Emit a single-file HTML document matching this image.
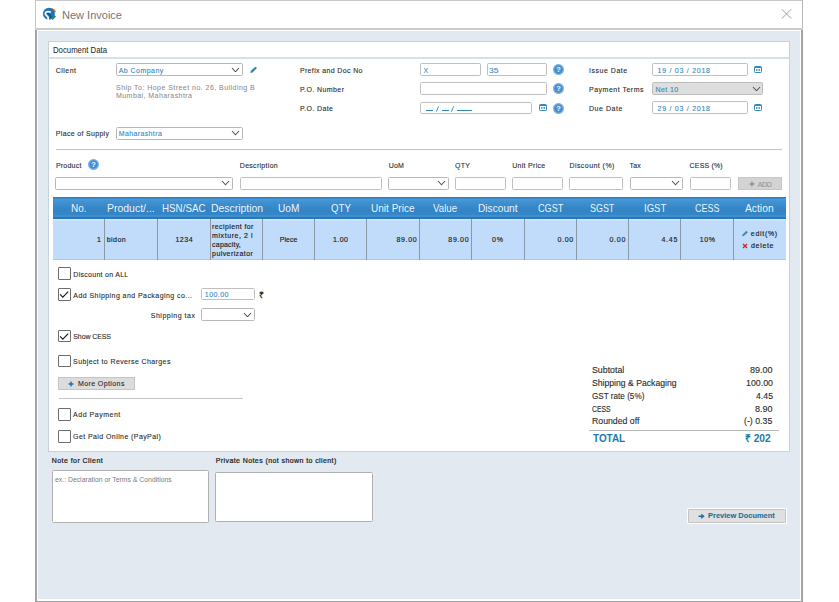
<!DOCTYPE html>
<html><head><meta charset="utf-8"><style>
html,body{margin:0;padding:0;background:#fff;width:839px;height:602px;overflow:hidden;position:relative;}
body>div,body>svg{position:absolute;}
.t{white-space:nowrap;font-family:"Liberation Sans",sans-serif;transform-origin:0 0;}
</style></head><body>
<div style="left:35.00px;top:0.00px;width:768.00px;height:602.00px;background:#fff;"></div>
<div style="left:35.00px;top:0.00px;width:768.00px;height:1.00px;background:#c8c8c8;"></div>
<div style="left:35.00px;top:0.00px;width:1.00px;height:28.00px;background:#c4c4c4;"></div>
<div style="left:801.50px;top:0.00px;width:1.50px;height:28.00px;background:#b8b8b8;"></div>
<div style="left:35.00px;top:28.00px;width:768.00px;height:2.00px;background:#cbcbcb;"></div>
<div style="left:35.00px;top:30.00px;width:2.00px;height:572.00px;background:#a3a3a3;"></div>
<div style="left:801.20px;top:30.00px;width:2.00px;height:572.00px;background:#a3a3a3;"></div>
<div style="left:35.00px;top:600.50px;width:768.20px;height:1.50px;background:#a3a3a3;"></div>
<div style="left:38.00px;top:31.00px;width:761.50px;height:567.60px;background:#e3e9f1;"></div>
<svg style="left:41.30px;top:7.00px;" width="16" height="14" viewBox="0 0 16 14">
<path d="M10.4 0.9 A6.4 6.4 0 0 1 15.2 4.9 L13.1 5.6 A4.3 4.3 0 0 0 9.8 2.8 Z" fill="#f07a1a"/>
<path d="M15.1 9.1 A6.4 6.4 0 0 1 11.3 12.9 L10.4 11 A4.3 4.3 0 0 0 13 8.4 Z" fill="#2e9a2e"/>
<circle cx="7.9" cy="6.8" r="6" fill="#1e74b8"/>
<path d="M9.8 5.4 C8.2 4.3 5 4.3 4.3 6.2 C3.8 7.8 6.2 8.6 6.9 10 C7.3 10.8 7.4 11.8 7.2 13.2" stroke="#fff" stroke-width="1.7" fill="none"/><path d="M6.5 6.3 C8.5 7 9.8 8.6 10 11" stroke="#0f4f8a" stroke-width="1.1" fill="none"/>
</svg>
<div class="t" style="left:62.00px;top:10.27px;font-size:11.5px;line-height:11.5px;color:#767676;font-weight:400;transform:scaleX(0.9579);">New Invoice</div>
<svg style="left:781.00px;top:8.00px;" width="12" height="12" viewBox="0 0 12 12"><path d="M0.8 1.2 L10.2 10.6 M10.2 1.2 L0.8 10.6" stroke="#8c8c8c" stroke-width="0.85"/></svg>
<div style="left:48.00px;top:41.00px;width:742.00px;height:411.00px;background:#fff;border:1px solid #c6d3dd;box-sizing:border-box;"></div>
<div class="t" style="left:52.60px;top:45.98px;font-size:9px;line-height:9px;color:#222;font-weight:400;transform:scaleX(0.8636);">Document Data</div>
<div style="left:49.00px;top:57.00px;width:740.00px;height:1.50px;background:#d6e0e8;"></div>
<div class="t" style="left:55.70px;top:66.77px;font-size:7px;line-height:7px;color:#2a2a2a;font-weight:400;letter-spacing:0.481px;-webkit-text-stroke:0.1px #2a2a2a;">Client</div>
<div class="t" style="left:116.00px;top:84.27px;font-size:7px;line-height:7px;color:#8a8a8a;font-weight:400;letter-spacing:0.458px;-webkit-text-stroke:0.05px #8a8a8a;">Ship To: Hope Street no. 26, Building B</div>
<div class="t" style="left:116.00px;top:92.47px;font-size:7px;line-height:7px;color:#8a8a8a;font-weight:400;letter-spacing:0.440px;-webkit-text-stroke:0.05px #8a8a8a;">Mumbai, Maharashtra</div>
<div class="t" style="left:55.80px;top:130.17px;font-size:7px;line-height:7px;color:#2a2a2a;font-weight:400;letter-spacing:0.326px;-webkit-text-stroke:0.1px #2a2a2a;">Place of Supply</div>
<div class="t" style="left:299.90px;top:66.77px;font-size:7px;line-height:7px;color:#2a2a2a;font-weight:400;letter-spacing:0.362px;-webkit-text-stroke:0.1px #2a2a2a;">Prefix and Doc No</div>
<div class="t" style="left:299.90px;top:85.87px;font-size:7px;line-height:7px;color:#2a2a2a;font-weight:400;letter-spacing:0.416px;-webkit-text-stroke:0.1px #2a2a2a;">P.O. Number</div>
<div class="t" style="left:299.90px;top:104.87px;font-size:7px;line-height:7px;color:#2a2a2a;font-weight:400;letter-spacing:0.408px;-webkit-text-stroke:0.1px #2a2a2a;">P.O. Date</div>
<div class="t" style="left:589.00px;top:66.77px;font-size:7px;line-height:7px;color:#2a2a2a;font-weight:400;letter-spacing:0.526px;-webkit-text-stroke:0.1px #2a2a2a;">Issue Date</div>
<div class="t" style="left:589.00px;top:85.87px;font-size:7px;line-height:7px;color:#2a2a2a;font-weight:400;letter-spacing:0.500px;-webkit-text-stroke:0.1px #2a2a2a;">Payment Terms</div>
<div class="t" style="left:589.00px;top:104.87px;font-size:7px;line-height:7px;color:#2a2a2a;font-weight:400;letter-spacing:0.547px;-webkit-text-stroke:0.1px #2a2a2a;">Due Date</div>
<div style="left:116.00px;top:63.00px;width:127.00px;height:13.00px;background:#fff;border:1px solid #b8b8b8;border-radius:1.5px;box-sizing:border-box;"></div>
<svg style="left:231.10px;top:66.60px;" width="9" height="5.8" viewBox="0 0 9 5.8"><path d="M1 1 L4.50 4.80 L8.00 1" stroke="#505050" stroke-width="1.05" fill="none"/></svg>
<div class="t" style="left:118.70px;top:66.67px;font-size:7px;line-height:7px;color:#3188be;font-weight:400;letter-spacing:0.459px;-webkit-text-stroke:0.1px #3188be;">Ab Company</div>
<svg style="left:249.00px;top:65.50px;" width="9" height="8" viewBox="0 0 9 8"><path d="M1.3 6.9 L1.9 4.7 L5.8 1.2 Q6.6 0.6 7.4 1.3 Q8 2 7.3 2.8 L3.5 6.4 Z" fill="#2c84b0"/></svg>
<div style="left:116.00px;top:127.00px;width:127.00px;height:12.50px;background:#fff;border:1px solid #b8b8b8;border-radius:1.5px;box-sizing:border-box;"></div>
<svg style="left:231.10px;top:130.35px;" width="9" height="5.8" viewBox="0 0 9 5.8"><path d="M1 1 L4.50 4.80 L8.00 1" stroke="#505050" stroke-width="1.05" fill="none"/></svg>
<div class="t" style="left:118.70px;top:130.37px;font-size:7px;line-height:7px;color:#3188be;font-weight:400;letter-spacing:0.380px;-webkit-text-stroke:0.1px #3188be;">Maharashtra</div>
<div style="left:420.00px;top:63.30px;width:61.00px;height:12.80px;background:#fff;border:1px solid #bfbfbf;border-radius:1.5px;box-sizing:border-box;"></div>
<div class="t" style="left:423.60px;top:66.77px;font-size:7px;line-height:7px;color:#3188be;font-weight:400;-webkit-text-stroke:0.05px #3188be;">X</div>
<div style="left:487.00px;top:63.30px;width:60.00px;height:12.80px;background:#fff;border:1px solid #bfbfbf;border-radius:1.5px;box-sizing:border-box;"></div>
<div class="t" style="left:489.40px;top:66.77px;font-size:7px;line-height:7px;color:#3188be;font-weight:400;transform:scaleX(1.1944);-webkit-text-stroke:0.08px #3188be;">35</div>
<div style="left:420.00px;top:82.40px;width:127.00px;height:12.80px;background:#fff;border:1px solid #bfbfbf;border-radius:1.5px;box-sizing:border-box;"></div>
<div style="left:420.00px;top:101.50px;width:112.00px;height:12.80px;background:#fff;border:1px solid #bfbfbf;border-radius:1.5px;box-sizing:border-box;"></div>
<div style="left:425.50px;top:110.20px;width:7.60px;height:0.90px;background:#3188be;"></div>
<div style="left:441.70px;top:110.20px;width:7.30px;height:0.90px;background:#3188be;"></div>
<div style="left:457.00px;top:110.20px;width:15.20px;height:0.90px;background:#3188be;"></div>
<svg style="left:435.60px;top:105.50px;" width="3" height="6" viewBox="0 0 3 6"><path d="M2.6 0.3 L0.4 5.7" stroke="#3188be" stroke-width="0.9"/></svg>
<svg style="left:451.20px;top:105.50px;" width="3" height="6" viewBox="0 0 3 6"><path d="M2.6 0.3 L0.4 5.7" stroke="#3188be" stroke-width="0.9"/></svg>
<svg style="left:539.00px;top:104.00px;" width="8" height="7" viewBox="0 0 8 7"><rect x="0.5" y="0.5" width="7" height="6" rx="0.8" fill="none" stroke="#3486bb" stroke-width="1"/><rect x="1" y="1" width="6" height="1" fill="#3486bb"/><rect x="2" y="3" width="1.5" height="2" fill="#5b9fcb"/><rect x="4.5" y="3" width="1.5" height="2" fill="#5b9fcb"/></svg>
<svg style="left:552.90px;top:64.30px;" width="11" height="11" viewBox="0 0 11 11"><circle cx="5.5" cy="5.5" r="4.9" fill="#4b93d4" stroke="#80b6e4" stroke-width="1.2"/>
<circle cx="5.5" cy="5.5" r="3.5" fill="none" stroke="#3b84c6" stroke-width="0.6"/>
<text x="5.5" y="8.2" text-anchor="middle" font-family="Liberation Sans" font-weight="700" font-size="7.5" fill="#eef6ff">?</text></svg>
<svg style="left:552.90px;top:83.10px;" width="11" height="11" viewBox="0 0 11 11"><circle cx="5.5" cy="5.5" r="4.9" fill="#4b93d4" stroke="#80b6e4" stroke-width="1.2"/>
<circle cx="5.5" cy="5.5" r="3.5" fill="none" stroke="#3b84c6" stroke-width="0.6"/>
<text x="5.5" y="8.2" text-anchor="middle" font-family="Liberation Sans" font-weight="700" font-size="7.5" fill="#eef6ff">?</text></svg>
<svg style="left:552.90px;top:102.50px;" width="11" height="11" viewBox="0 0 11 11"><circle cx="5.5" cy="5.5" r="4.9" fill="#4b93d4" stroke="#80b6e4" stroke-width="1.2"/>
<circle cx="5.5" cy="5.5" r="3.5" fill="none" stroke="#3b84c6" stroke-width="0.6"/>
<text x="5.5" y="8.2" text-anchor="middle" font-family="Liberation Sans" font-weight="700" font-size="7.5" fill="#eef6ff">?</text></svg>
<div style="left:652.20px;top:63.20px;width:95.80px;height:12.70px;background:#fff;border:1px solid #bfbfbf;border-radius:1.5px;box-sizing:border-box;"></div>
<div class="t" style="left:657.50px;top:66.77px;font-size:7px;line-height:7px;color:#3188be;font-weight:400;letter-spacing:0.745px;-webkit-text-stroke:0.1px #3188be;">19 / 03 / 2018</div>
<div style="left:652.20px;top:81.80px;width:110.80px;height:13.20px;background:#dedede;border:1px solid #bdbdbd;border-radius:1.5px;box-sizing:border-box;"></div>
<svg style="left:752.00px;top:85.50px;" width="9" height="5.8" viewBox="0 0 9 5.8"><path d="M1 1 L4.50 4.80 L8.00 1" stroke="#505050" stroke-width="1.05" fill="none"/></svg>
<div class="t" style="left:655.50px;top:85.77px;font-size:7px;line-height:7px;color:#3188be;font-weight:400;letter-spacing:0.395px;-webkit-text-stroke:0.1px #3188be;">Net 10</div>
<div style="left:652.20px;top:101.40px;width:95.80px;height:12.70px;background:#fff;border:1px solid #bfbfbf;border-radius:1.5px;box-sizing:border-box;"></div>
<div class="t" style="left:657.50px;top:104.97px;font-size:7px;line-height:7px;color:#3188be;font-weight:400;letter-spacing:0.745px;-webkit-text-stroke:0.1px #3188be;">29 / 03 / 2018</div>
<svg style="left:754.00px;top:66.00px;" width="8" height="7" viewBox="0 0 8 7"><rect x="0.5" y="0.5" width="7" height="6" rx="0.8" fill="none" stroke="#3486bb" stroke-width="1"/><rect x="1" y="1" width="6" height="1" fill="#3486bb"/><rect x="2" y="3" width="1.5" height="2" fill="#5b9fcb"/><rect x="4.5" y="3" width="1.5" height="2" fill="#5b9fcb"/></svg>
<svg style="left:754.00px;top:104.00px;" width="8" height="7" viewBox="0 0 8 7"><rect x="0.5" y="0.5" width="7" height="6" rx="0.8" fill="none" stroke="#3486bb" stroke-width="1"/><rect x="1" y="1" width="6" height="1" fill="#3486bb"/><rect x="2" y="3" width="1.5" height="2" fill="#5b9fcb"/><rect x="4.5" y="3" width="1.5" height="2" fill="#5b9fcb"/></svg>
<div style="left:55.60px;top:149.00px;width:726.70px;height:1.20px;background:#c4c4c4;"></div>
<div class="t" style="left:55.90px;top:162.37px;font-size:7px;line-height:7px;color:#2a2a2a;font-weight:400;letter-spacing:0.229px;-webkit-text-stroke:0.1px #2a2a2a;">Product</div>
<svg style="left:87.50px;top:159.10px;" width="11" height="11" viewBox="0 0 11 11"><circle cx="5.5" cy="5.5" r="4.9" fill="#4b93d4" stroke="#80b6e4" stroke-width="1.2"/>
<circle cx="5.5" cy="5.5" r="3.5" fill="none" stroke="#3b84c6" stroke-width="0.6"/>
<text x="5.5" y="8.2" text-anchor="middle" font-family="Liberation Sans" font-weight="700" font-size="7.5" fill="#eef6ff">?</text></svg>
<div class="t" style="left:239.80px;top:162.37px;font-size:7px;line-height:7px;color:#2a2a2a;font-weight:400;letter-spacing:0.289px;-webkit-text-stroke:0.1px #2a2a2a;">Description</div>
<div class="t" style="left:388.80px;top:162.37px;font-size:7px;line-height:7px;color:#2a2a2a;font-weight:400;letter-spacing:0.110px;-webkit-text-stroke:0.1px #2a2a2a;">UoM</div>
<div class="t" style="left:455.00px;top:162.37px;font-size:7px;line-height:7px;color:#2a2a2a;font-weight:400;letter-spacing:0.205px;-webkit-text-stroke:0.1px #2a2a2a;">QTY</div>
<div class="t" style="left:512.20px;top:162.37px;font-size:7px;line-height:7px;color:#2a2a2a;font-weight:400;letter-spacing:0.295px;-webkit-text-stroke:0.1px #2a2a2a;">Unit Price</div>
<div class="t" style="left:569.40px;top:162.37px;font-size:7px;line-height:7px;color:#2a2a2a;font-weight:400;letter-spacing:0.449px;-webkit-text-stroke:0.1px #2a2a2a;">Discount (%)</div>
<div class="t" style="left:629.50px;top:162.37px;font-size:7px;line-height:7px;color:#2a2a2a;font-weight:400;letter-spacing:0.166px;-webkit-text-stroke:0.1px #2a2a2a;">Tax</div>
<div class="t" style="left:689.60px;top:162.37px;font-size:7px;line-height:7px;color:#2a2a2a;font-weight:400;letter-spacing:0.158px;-webkit-text-stroke:0.1px #2a2a2a;">CESS (%)</div>
<div style="left:55.20px;top:177.00px;width:178.00px;height:12.60px;background:#fff;border:1px solid #b8b8b8;border-radius:1.5px;box-sizing:border-box;"></div>
<svg style="left:221.30px;top:180.40px;" width="9" height="5.8" viewBox="0 0 9 5.8"><path d="M1 1 L4.50 4.80 L8.00 1" stroke="#505050" stroke-width="1.05" fill="none"/></svg>
<div style="left:239.50px;top:177.00px;width:142.50px;height:12.60px;background:#fff;border:1px solid #bfbfbf;border-radius:1.5px;box-sizing:border-box;"></div>
<div style="left:388.20px;top:177.00px;width:60.80px;height:12.60px;background:#fff;border:1px solid #b8b8b8;border-radius:1.5px;box-sizing:border-box;"></div>
<svg style="left:437.10px;top:180.40px;" width="9" height="5.8" viewBox="0 0 9 5.8"><path d="M1 1 L4.50 4.80 L8.00 1" stroke="#505050" stroke-width="1.05" fill="none"/></svg>
<div style="left:455.00px;top:177.00px;width:50.80px;height:12.60px;background:#fff;border:1px solid #bfbfbf;border-radius:1.5px;box-sizing:border-box;"></div>
<div style="left:512.20px;top:177.00px;width:50.40px;height:12.60px;background:#fff;border:1px solid #bfbfbf;border-radius:1.5px;box-sizing:border-box;"></div>
<div style="left:569.40px;top:177.00px;width:53.60px;height:12.60px;background:#fff;border:1px solid #bfbfbf;border-radius:1.5px;box-sizing:border-box;"></div>
<div style="left:629.50px;top:177.00px;width:53.60px;height:12.60px;background:#fff;border:1px solid #b8b8b8;border-radius:1.5px;box-sizing:border-box;"></div>
<svg style="left:671.20px;top:180.40px;" width="9" height="5.8" viewBox="0 0 9 5.8"><path d="M1 1 L4.50 4.80 L8.00 1" stroke="#505050" stroke-width="1.05" fill="none"/></svg>
<div style="left:689.60px;top:177.00px;width:41.10px;height:12.60px;background:#fff;border:1px solid #bfbfbf;border-radius:1.5px;box-sizing:border-box;"></div>
<div style="left:738.00px;top:177.00px;width:43.80px;height:12.80px;background:#d3d3d3;border:1px solid #c6c6c6;box-sizing:border-box;"></div>
<svg style="left:748.60px;top:180.60px;" width="6" height="6" viewBox="0 0 6 6"><path d="M3 0.5 V5.5 M0.5 3 H5.5" stroke="#8f8f8f" stroke-width="1.3"/></svg>
<div class="t" style="left:757.80px;top:181.07px;font-size:7px;line-height:7px;color:#979797;font-weight:400;letter-spacing:-0.390px;-webkit-text-stroke:0.15px #979797;">ADD</div>
<div style="left:52.60px;top:197.30px;width:733.20px;height:21.70px;background:linear-gradient(to bottom,#2b7dc0 0px,#2b7dc0 1.2px,#4c9ad8 1.8px,#3f91d1 5px,#3384c5 13px,#3586c8 17.5px,#4796d5 19.2px,#2977b8 20.4px,#2977b8 100%);"></div>
<div style="left:52.60px;top:219.00px;width:733.20px;height:40.60px;background:linear-gradient(#d8e8fb 0,#d8e8fb 1px,#c0dcfa 1.8px,#c0dcfa 100%);border-bottom:1px solid #b5c8da;box-sizing:border-box;"></div>
<div style="left:104.00px;top:219.00px;width:1.00px;height:40.60px;background:#8b98a5;"></div>
<div style="left:157.00px;top:219.00px;width:1.00px;height:40.60px;background:#8b98a5;"></div>
<div style="left:210.00px;top:219.00px;width:1.00px;height:40.60px;background:#8b98a5;"></div>
<div style="left:262.00px;top:219.00px;width:1.00px;height:40.60px;background:#8b98a5;"></div>
<div style="left:314.00px;top:219.00px;width:1.00px;height:40.60px;background:#8b98a5;"></div>
<div style="left:366.00px;top:219.00px;width:1.00px;height:40.60px;background:#8b98a5;"></div>
<div style="left:419.00px;top:219.00px;width:1.00px;height:40.60px;background:#8b98a5;"></div>
<div style="left:471.00px;top:219.00px;width:1.00px;height:40.60px;background:#8b98a5;"></div>
<div style="left:524.00px;top:219.00px;width:1.00px;height:40.60px;background:#8b98a5;"></div>
<div style="left:576.00px;top:219.00px;width:1.00px;height:40.60px;background:#8b98a5;"></div>
<div style="left:628.00px;top:219.00px;width:1.00px;height:40.60px;background:#8b98a5;"></div>
<div style="left:680.00px;top:219.00px;width:1.00px;height:40.60px;background:#8b98a5;"></div>
<div style="left:733.00px;top:219.00px;width:1.00px;height:40.60px;background:#8b98a5;"></div>
<div class="t" style="left:70.65px;top:203.09px;font-size:11px;line-height:11px;color:rgba(255,255,255,0.93);font-weight:400;transform:scaleX(0.9055);">No.</div>
<div class="t" style="left:107.05px;top:203.09px;font-size:11px;line-height:11px;color:rgba(255,255,255,0.93);font-weight:400;transform:scaleX(0.9515);">Product/...</div>
<div class="t" style="left:162.20px;top:203.09px;font-size:11px;line-height:11px;color:rgba(255,255,255,0.93);font-weight:400;transform:scaleX(0.8896);">HSN/SAC</div>
<div class="t" style="left:210.70px;top:203.09px;font-size:11px;line-height:11px;color:rgba(255,255,255,0.93);font-weight:400;transform:scaleX(0.9451);">Description</div>
<div class="t" style="left:278.00px;top:203.09px;font-size:11px;line-height:11px;color:rgba(255,255,255,0.93);font-weight:400;transform:scaleX(0.9171);">UoM</div>
<div class="t" style="left:330.70px;top:203.09px;font-size:11px;line-height:11px;color:rgba(255,255,255,0.93);font-weight:400;transform:scaleX(0.8756);">QTY</div>
<div class="t" style="left:371.20px;top:203.09px;font-size:11px;line-height:11px;color:rgba(255,255,255,0.93);font-weight:400;transform:scaleX(0.9123);">Unit Price</div>
<div class="t" style="left:433.00px;top:203.09px;font-size:11px;line-height:11px;color:rgba(255,255,255,0.93);font-weight:400;transform:scaleX(0.8815);">Value</div>
<div class="t" style="left:477.90px;top:203.09px;font-size:11px;line-height:11px;color:rgba(255,255,255,0.93);font-weight:400;transform:scaleX(0.9230);">Discount</div>
<div class="t" style="left:537.50px;top:203.09px;font-size:11px;line-height:11px;color:rgba(255,255,255,0.93);font-weight:400;transform:scaleX(0.8280);">CGST</div>
<div class="t" style="left:590.40px;top:203.09px;font-size:11px;line-height:11px;color:rgba(255,255,255,0.93);font-weight:400;transform:scaleX(0.8114);">SGST</div>
<div class="t" style="left:643.50px;top:203.09px;font-size:11px;line-height:11px;color:rgba(255,255,255,0.93);font-weight:400;transform:scaleX(0.8649);">IGST</div>
<div class="t" style="left:694.60px;top:203.09px;font-size:11px;line-height:11px;color:rgba(255,255,255,0.93);font-weight:400;transform:scaleX(0.8146);">CESS</div>
<div class="t" style="left:745.20px;top:203.09px;font-size:11px;line-height:11px;color:rgba(255,255,255,0.93);font-weight:400;transform:scaleX(0.9355);">Action</div>
<div class="t" style="left:96.91px;top:235.87px;font-size:7px;line-height:7px;color:#1e1e1e;font-weight:400;-webkit-text-stroke:0.16px #1e1e1e;">1</div>
<div class="t" style="left:106.70px;top:235.87px;font-size:7px;line-height:7px;color:#1e1e1e;font-weight:400;letter-spacing:0.468px;-webkit-text-stroke:0.16px #1e1e1e;">bidon</div>
<div class="t" style="left:175.40px;top:235.87px;font-size:7px;line-height:7px;color:#1e1e1e;font-weight:400;letter-spacing:0.543px;-webkit-text-stroke:0.16px #1e1e1e;">1234</div>
<div class="t" style="left:212.10px;top:223.17px;font-size:7px;line-height:7px;color:#1e1e1e;font-weight:400;letter-spacing:0.394px;-webkit-text-stroke:0.16px #1e1e1e;">recipient for</div>
<div class="t" style="left:212.10px;top:232.17px;font-size:7px;line-height:7px;color:#1e1e1e;font-weight:400;letter-spacing:0.570px;-webkit-text-stroke:0.16px #1e1e1e;">mixture, 2 l</div>
<div class="t" style="left:212.10px;top:241.07px;font-size:7px;line-height:7px;color:#1e1e1e;font-weight:400;letter-spacing:0.197px;-webkit-text-stroke:0.16px #1e1e1e;">capacity,</div>
<div class="t" style="left:212.10px;top:250.07px;font-size:7px;line-height:7px;color:#1e1e1e;font-weight:400;letter-spacing:0.411px;-webkit-text-stroke:0.16px #1e1e1e;">pulverizator</div>
<div class="t" style="left:279.70px;top:235.87px;font-size:7px;line-height:7px;color:#1e1e1e;font-weight:400;letter-spacing:0.072px;-webkit-text-stroke:0.16px #1e1e1e;">Piece</div>
<div class="t" style="left:333.00px;top:235.87px;font-size:7px;line-height:7px;color:#1e1e1e;font-weight:400;letter-spacing:0.459px;-webkit-text-stroke:0.16px #1e1e1e;">1.00</div>
<div class="t" style="left:396.40px;top:235.87px;font-size:7px;line-height:7px;color:#1e1e1e;font-weight:400;letter-spacing:0.696px;-webkit-text-stroke:0.16px #1e1e1e;">89.00</div>
<div class="t" style="left:448.30px;top:235.87px;font-size:7px;line-height:7px;color:#1e1e1e;font-weight:400;letter-spacing:0.696px;-webkit-text-stroke:0.16px #1e1e1e;">89.00</div>
<div class="t" style="left:492.10px;top:235.87px;font-size:7px;line-height:7px;color:#1e1e1e;font-weight:400;letter-spacing:0.883px;-webkit-text-stroke:0.16px #1e1e1e;">0%</div>
<div class="t" style="left:557.40px;top:235.87px;font-size:7px;line-height:7px;color:#1e1e1e;font-weight:400;letter-spacing:0.725px;-webkit-text-stroke:0.16px #1e1e1e;">0.00</div>
<div class="t" style="left:609.50px;top:235.87px;font-size:7px;line-height:7px;color:#1e1e1e;font-weight:400;letter-spacing:0.725px;-webkit-text-stroke:0.16px #1e1e1e;">0.00</div>
<div class="t" style="left:661.40px;top:235.87px;font-size:7px;line-height:7px;color:#1e1e1e;font-weight:400;letter-spacing:0.792px;-webkit-text-stroke:0.16px #1e1e1e;">4.45</div>
<div class="t" style="left:699.70px;top:235.87px;font-size:7px;line-height:7px;color:#1e1e1e;font-weight:400;letter-spacing:0.595px;-webkit-text-stroke:0.16px #1e1e1e;">10%</div>
<svg style="left:741.00px;top:230.00px;" width="8" height="7" viewBox="0 0 8 7"><path d="M1 6.2 L1.6 4.4 L5.4 0.8 L6.9 2.2 L3.1 5.8 Z" fill="#3d8aa8"/></svg>
<div class="t" style="left:750.80px;top:230.07px;font-size:7px;line-height:7px;color:#1e1e1e;font-weight:400;letter-spacing:0.705px;-webkit-text-stroke:0.16px #1e1e1e;">edit(%)</div>
<svg style="left:742.00px;top:242.50px;" width="6" height="6" viewBox="0 0 6 6"><path d="M1 1 L5 5 M5 1 L1 5" stroke="#d42020" stroke-width="1.3"/></svg>
<div class="t" style="left:751.00px;top:241.57px;font-size:7px;line-height:7px;color:#1e1e1e;font-weight:400;letter-spacing:0.686px;-webkit-text-stroke:0.16px #1e1e1e;">delete</div>
<div style="left:58.00px;top:267.30px;width:12.80px;height:12.60px;background:#fff;border:1px solid #6c6c6c;border-radius:1px;box-sizing:border-box;"></div>
<div class="t" style="left:73.30px;top:270.77px;font-size:7px;line-height:7px;color:#2a2a2a;font-weight:400;letter-spacing:0.281px;-webkit-text-stroke:0.1px #2a2a2a;">Discount on ALL</div>
<div style="left:58.00px;top:288.30px;width:12.80px;height:12.60px;background:#fff;border:1px solid #6c6c6c;border-radius:1px;box-sizing:border-box;"></div>
<svg style="left:58.00px;top:288.30px;" width="13" height="13" viewBox="0 0 13 13"><path d="M2.1 6.3 L4.8 9.1 L10.2 3.6" stroke="#1a1a1a" stroke-width="1.15" fill="none"/></svg>
<div class="t" style="left:73.30px;top:291.77px;font-size:7px;line-height:7px;color:#2a2a2a;font-weight:400;letter-spacing:0.440px;-webkit-text-stroke:0.1px #2a2a2a;">Add Shipping and Packaging co...</div>
<div style="left:201.30px;top:288.00px;width:53.90px;height:12.40px;background:#fff;border:1px solid #bfbfbf;border-radius:1.5px;box-sizing:border-box;"></div>
<div class="t" style="left:204.80px;top:291.47px;font-size:7px;line-height:7px;color:#3188be;font-weight:400;letter-spacing:0.438px;-webkit-text-stroke:0.1px #3188be;">100.00</div>
<div class="t" style="left:259.00px;top:291.10px;font-size:8.5px;line-height:8.5px;color:#222;font-weight:700;">₹</div>
<div class="t" style="left:150.70px;top:311.77px;font-size:7px;line-height:7px;color:#2a2a2a;font-weight:400;letter-spacing:0.525px;-webkit-text-stroke:0.1px #2a2a2a;">Shipping tax</div>
<div style="left:201.30px;top:308.40px;width:53.90px;height:12.40px;background:#fff;border:1px solid #b8b8b8;border-radius:1.5px;box-sizing:border-box;"></div>
<svg style="left:243.30px;top:311.70px;" width="9" height="5.8" viewBox="0 0 9 5.8"><path d="M1 1 L4.50 4.80 L8.00 1" stroke="#505050" stroke-width="1.05" fill="none"/></svg>
<div style="left:58.00px;top:329.70px;width:12.80px;height:12.60px;background:#fff;border:1px solid #6c6c6c;border-radius:1px;box-sizing:border-box;"></div>
<svg style="left:58.00px;top:329.70px;" width="13" height="13" viewBox="0 0 13 13"><path d="M2.1 6.3 L4.8 9.1 L10.2 3.6" stroke="#1a1a1a" stroke-width="1.15" fill="none"/></svg>
<div class="t" style="left:73.30px;top:333.17px;font-size:7px;line-height:7px;color:#2a2a2a;font-weight:400;letter-spacing:-0.102px;-webkit-text-stroke:0.1px #2a2a2a;">Show CESS</div>
<div style="left:58.00px;top:354.50px;width:12.80px;height:12.60px;background:#fff;border:1px solid #6c6c6c;border-radius:1px;box-sizing:border-box;"></div>
<div class="t" style="left:73.10px;top:358.07px;font-size:7px;line-height:7px;color:#2a2a2a;font-weight:400;letter-spacing:0.390px;-webkit-text-stroke:0.1px #2a2a2a;">Subject to Reverse Charges</div>
<div style="left:57.90px;top:377.20px;width:76.70px;height:13.10px;background:#dcdcdc;border:1px solid #c4c4c4;box-sizing:border-box;"></div>
<svg style="left:68.40px;top:381.00px;" width="6" height="6" viewBox="0 0 6 6"><path d="M3 0.6 V5.4 M0.6 3 H5.4" stroke="#1f6fa8" stroke-width="1.4"/></svg>
<div class="t" style="left:77.90px;top:380.47px;font-size:7px;line-height:7px;color:#2a2a2a;font-weight:400;letter-spacing:0.408px;-webkit-text-stroke:0.1px #2a2a2a;">More Options</div>
<div style="left:58.80px;top:398.20px;width:184.20px;height:1.00px;background:#c4c4c4;"></div>
<div style="left:58.00px;top:408.20px;width:12.80px;height:12.60px;background:#fff;border:1px solid #6c6c6c;border-radius:1px;box-sizing:border-box;"></div>
<div class="t" style="left:73.10px;top:410.97px;font-size:7px;line-height:7px;color:#2a2a2a;font-weight:400;letter-spacing:0.518px;-webkit-text-stroke:0.1px #2a2a2a;">Add Payment</div>
<div style="left:58.00px;top:430.30px;width:12.80px;height:12.60px;background:#fff;border:1px solid #6c6c6c;border-radius:1px;box-sizing:border-box;"></div>
<div class="t" style="left:73.10px;top:432.87px;font-size:7px;line-height:7px;color:#2a2a2a;font-weight:400;letter-spacing:0.413px;-webkit-text-stroke:0.1px #2a2a2a;">Get Paid Online (PayPal)</div>
<div class="t" style="left:592.20px;top:366.48px;font-size:9px;line-height:9px;color:#2b2b2b;font-weight:400;transform:scaleX(0.9780);-webkit-text-stroke:0.12px #2b2b2b;">Subtotal</div>
<div class="t" style="left:750.10px;top:366.48px;font-size:9px;line-height:9px;color:#2b2b2b;font-weight:400;-webkit-text-stroke:0.12px #2b2b2b;">89.00</div>
<div class="t" style="left:592.20px;top:379.08px;font-size:9px;line-height:9px;color:#2b2b2b;font-weight:400;transform:scaleX(0.9607);-webkit-text-stroke:0.12px #2b2b2b;">Shipping &amp; Packaging</div>
<div class="t" style="left:745.60px;top:379.08px;font-size:9px;line-height:9px;color:#2b2b2b;font-weight:400;transform:scaleX(0.9808);-webkit-text-stroke:0.12px #2b2b2b;">100.00</div>
<div class="t" style="left:592.20px;top:391.78px;font-size:9px;line-height:9px;color:#2b2b2b;font-weight:400;transform:scaleX(0.9050);-webkit-text-stroke:0.12px #2b2b2b;">GST rate (5%)</div>
<div class="t" style="left:755.60px;top:391.78px;font-size:9px;line-height:9px;color:#2b2b2b;font-weight:400;transform:scaleX(0.9705);-webkit-text-stroke:0.12px #2b2b2b;">4.45</div>
<div class="t" style="left:592.20px;top:404.58px;font-size:9px;line-height:9px;color:#2b2b2b;font-weight:400;transform:scaleX(0.7589);-webkit-text-stroke:0.12px #2b2b2b;">CESS</div>
<div class="t" style="left:755.10px;top:404.58px;font-size:9px;line-height:9px;color:#2b2b2b;font-weight:400;-webkit-text-stroke:0.12px #2b2b2b;">8.90</div>
<div class="t" style="left:592.20px;top:417.28px;font-size:9px;line-height:9px;color:#2b2b2b;font-weight:400;transform:scaleX(0.9686);-webkit-text-stroke:0.12px #2b2b2b;">Rounded off</div>
<div class="t" style="left:744.30px;top:417.28px;font-size:9px;line-height:9px;color:#2b2b2b;font-weight:400;transform:scaleX(0.9756);-webkit-text-stroke:0.12px #2b2b2b;">(-) 0.35</div>
<div style="left:589.30px;top:429.80px;width:190.00px;height:1.00px;background:#b8b8b8;"></div>
<div class="t" style="left:592.90px;top:433.31px;font-size:10.5px;line-height:10.5px;color:#1b7aa8;font-weight:700;transform:scaleX(0.9459);">TOTAL</div>
<div class="t" style="left:745.20px;top:433.31px;font-size:10.5px;line-height:10.5px;color:#1b7aa8;font-weight:700;transform:scaleX(0.9678);">₹ 202</div>
<div class="t" style="left:51.70px;top:457.27px;font-size:7px;line-height:7px;color:#222;font-weight:400;letter-spacing:0.447px;-webkit-text-stroke:0.22px #222;">Note for Client</div>
<div style="left:51.50px;top:470.30px;width:157.60px;height:53.10px;background:#fff;border:1px solid #b0b0b0;border-radius:1.5px;box-sizing:border-box;"></div>
<div class="t" style="left:55.10px;top:475.53px;font-size:8px;line-height:8px;color:#7c7c7c;font-weight:400;transform:scaleX(0.8560);">ex.: Declaration or Terms &amp; Conditions</div>
<div class="t" style="left:215.70px;top:457.07px;font-size:7px;line-height:7px;color:#222;font-weight:400;letter-spacing:0.412px;-webkit-text-stroke:0.22px #222;">Private Notes (not shown to client)</div>
<div style="left:215.30px;top:471.50px;width:157.50px;height:50.00px;background:#fff;border:1px solid #b0b0b0;border-radius:1.5px;box-sizing:border-box;"></div>
<div style="left:687.90px;top:508.60px;width:98.30px;height:14.60px;background:#e0e0e0;border:1px solid #c4c4c4;box-shadow:0 0 0 1px #fff;border-radius:1px;box-sizing:border-box;"></div>
<svg style="left:698.30px;top:512.60px;" width="8" height="7" viewBox="0 0 8 7"><path d="M0.5 3.3 H4" stroke="#1a6f9c" stroke-width="1.5"/><path d="M3.3 0.6 L6.6 3.3 L3.3 6 Z" fill="#1a6f9c"/></svg>
<div class="t" style="left:708.40px;top:511.73px;font-size:8px;line-height:8px;color:#1a6f9c;font-weight:700;transform:scaleX(0.9332);-webkit-text-stroke:0.1px #1a6f9c;">Preview Document</div>
</body></html>
